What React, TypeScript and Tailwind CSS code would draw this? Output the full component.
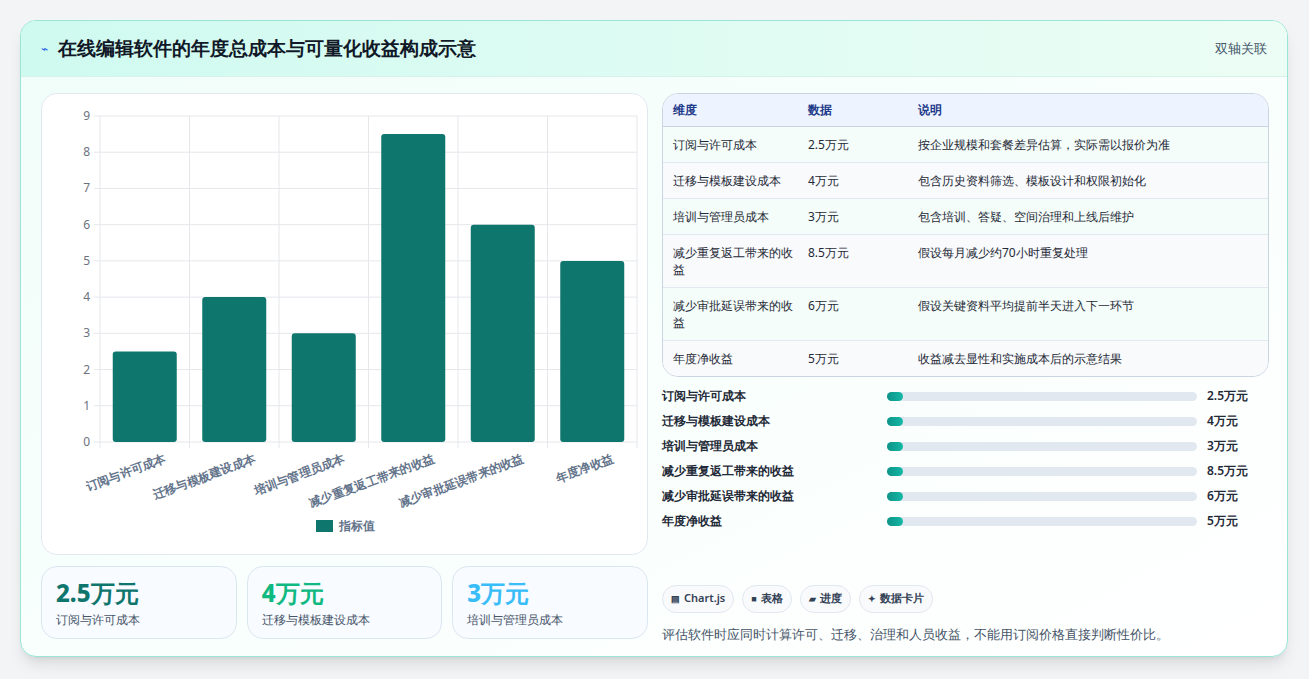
const rows = [
  { name: "订阅与许可成本", val: 2.5, data: "2.5万元", note: "按企业规模和套餐差异估算，实际需以报价为准" },
  { name: "迁移与模板建设成本", val: 4, data: "4万元", note: "包含历史资料筛选、模板设计和权限初始化" },
  { name: "培训与管理员成本", val: 3, data: "3万元", note: "包含培训、答疑、空间治理和上线后维护" },
  { name: "减少重复返工带来的收益", val: 8.5, data: "8.5万元", note: "假设每月减少约70小时重复处理" },
  { name: "减少审批延误带来的收益", val: 6, data: "6万元", note: "假设关键资料平均提前半天进入下一环节" },
  { name: "年度净收益", val: 5, data: "5万元", note: "收益减去显性和实施成本后的示意结果" },
]

function Chart() {
  const x0 = 58, x1 = 595, y0 = 22, yb = 348
  const unit = (yb - y0) / 9
  const cw = (x1 - x0) / 6
  return (
    <svg width="606" height="460" className="block">
      {Array.from({ length: 10 }).map((_, i) => {
        const y = yb - i * unit
        return (
          <g key={i}>
            <line x1={x0 - 6} x2={x1} y1={y} y2={y} stroke="#e5e7eb" />
            <text x={x0 - 10} y={y + 4} fontSize="12" fill="#6b7280" textAnchor="end">{i}</text>
          </g>
        )
      })}
      {Array.from({ length: 7 }).map((_, i) => (
        <line key={i} x1={x0 + i * cw} x2={x0 + i * cw} y1={y0} y2={yb + 6} stroke="#e5e7eb" />
      ))}
      {rows.map((r, i) => {
        const cx = x0 + cw * i + cw / 2
        const h = r.val * unit
        return (
          <g key={r.name}>
            <rect x={cx - 32} y={yb - h} width="64" height={h} rx="3" fill="#0f766e" />
            <text x={cx + 22} y={yb + 20} fontSize="12" fontWeight="600" fill="#64748b" textAnchor="end" transform={`rotate(-20 ${cx + 22} ${yb + 20})`}>{r.name}</text>
          </g>
        )
      })}
      <rect x="274" y="426" width="17" height="12" fill="#0f766e" />
      <text x="297" y="436" fontSize="12" fontWeight="600" fill="#64748b">指标值</text>
    </svg>
  )
}

export default function App() {
  return (
    <div className="w-[1309px] h-[679px] bg-[#f3f4f6] pt-5 pl-5 font-['Noto_Sans_CJK_SC',sans-serif]">
      <div className="w-[1268px] h-[637px] rounded-2xl border border-[#99e6d6] bg-gradient-to-br from-[#f0fdf9] via-[#f8fffc] to-white shadow-lg overflow-hidden">
        <div className="h-[56px] flex items-center justify-between px-5 bg-gradient-to-r from-[#cffaf0] to-[#ecfdf5] border-b border-[#d5f3ea]">
          <div className="flex items-center gap-2.5">
            <span className="text-[#2563eb] text-xs">⌁</span>
            <h1 className="text-[19px] font-bold text-[#111827]">在线编辑软件的年度总成本与可量化收益构成示意</h1>
          </div>
          <span className="text-[13px] text-[#475569]">双轴关联</span>
        </div>
        <div className="grid grid-cols-2 gap-[14px] pl-5 pr-[18px] pt-4">
          <div className="flex flex-col gap-[11px]">
            <div className="h-[462px] rounded-2xl border border-[#e2e8f0] bg-white">
              <Chart />
            </div>
            <div className="grid grid-cols-3 gap-[10px]">
              {[
                ["2.5万元", "订阅与许可成本", "text-[#0f766e]"],
                ["4万元", "迁移与模板建设成本", "text-[#10b981]"],
                ["3万元", "培训与管理员成本", "text-[#38bdf8]"],
              ].map(([v, l, c]) => (
                <div key={l} className="h-[73px] rounded-2xl border border-[#dbe7f0] bg-[#f8fbff] px-3.5 pt-2.5">
                  <div className={`text-[24px] font-extrabold leading-8 ${c}`}>{v}</div>
                  <div className="text-[12px] text-[#475569] mt-0.5">{l}</div>
                </div>
              ))}
            </div>
          </div>
          <div className="flex flex-col">
            <div className="rounded-2xl border border-[#cbd5e1] overflow-hidden bg-white">
              <table className="w-full text-[12px] text-[#1f2937]">
                <thead>
                  <tr className="bg-[#eef4ff] text-[#1e3a8a] h-[32px] border-b border-[#cbd5e1]">
                    <th className="text-left font-semibold pl-2.5 w-[145px]">维度</th>
                    <th className="text-left font-semibold w-[110px]">数据</th>
                    <th className="text-left font-semibold">说明</th>
                  </tr>
                </thead>
                <tbody>
                  {rows.map((r, i) => (
                    <tr key={r.name} className={`border-b border-[#e2e8f0] last:border-b-0 align-top ${i % 2 ? "bg-[#f8fafc]" : "bg-[#f4fdf9]"}`}>
                      <td className="pl-2.5 pr-3 py-[9px] leading-[17px]">{r.name}</td>
                      <td className="py-[9px] leading-[17px]">{r.data}</td>
                      <td className="py-[9px] leading-[17px]">{r.note}</td>
                    </tr>
                  ))}
                </tbody>
              </table>
            </div>
            <div className="mt-[11px] flex flex-col gap-[8px]">
              {rows.map((r) => (
                <div key={r.name} className="flex items-center h-[17px] text-[12px] font-semibold text-[#1f2937]">
                  <span className="w-[225px]">{r.name}</span>
                  <div className="w-[310px] h-[9px] rounded-full bg-[#e2e8f0]">
                    <div className="w-4 h-[9px] rounded-full bg-gradient-to-r from-[#0d9488] to-[#14b8a6]" />
                  </div>
                  <span className="ml-2.5">{r.data}</span>
                </div>
              ))}
            </div>
            <div className="mt-[55px] flex gap-2">
              {[["▤", "Chart.js"], ["■", "表格"], ["▰", "进度"], ["✦", "数据卡片"]].map(([ic, t]) => (
                <span key={t} className="h-[28px] px-2 rounded-full border border-[#e2e8f0] bg-[#f8fafc] text-[11px] font-semibold text-[#334155] flex items-center gap-1">
                  <span className="text-[9px]">{ic}</span>{t}
                </span>
              ))}
            </div>
            <p className="mt-[12px] text-[13px] text-[#475569]">评估软件时应同时计算许可、迁移、治理和人员收益，不能用订阅价格直接判断性价比。</p>
          </div>
        </div>
      </div>
    </div>
  )
}
